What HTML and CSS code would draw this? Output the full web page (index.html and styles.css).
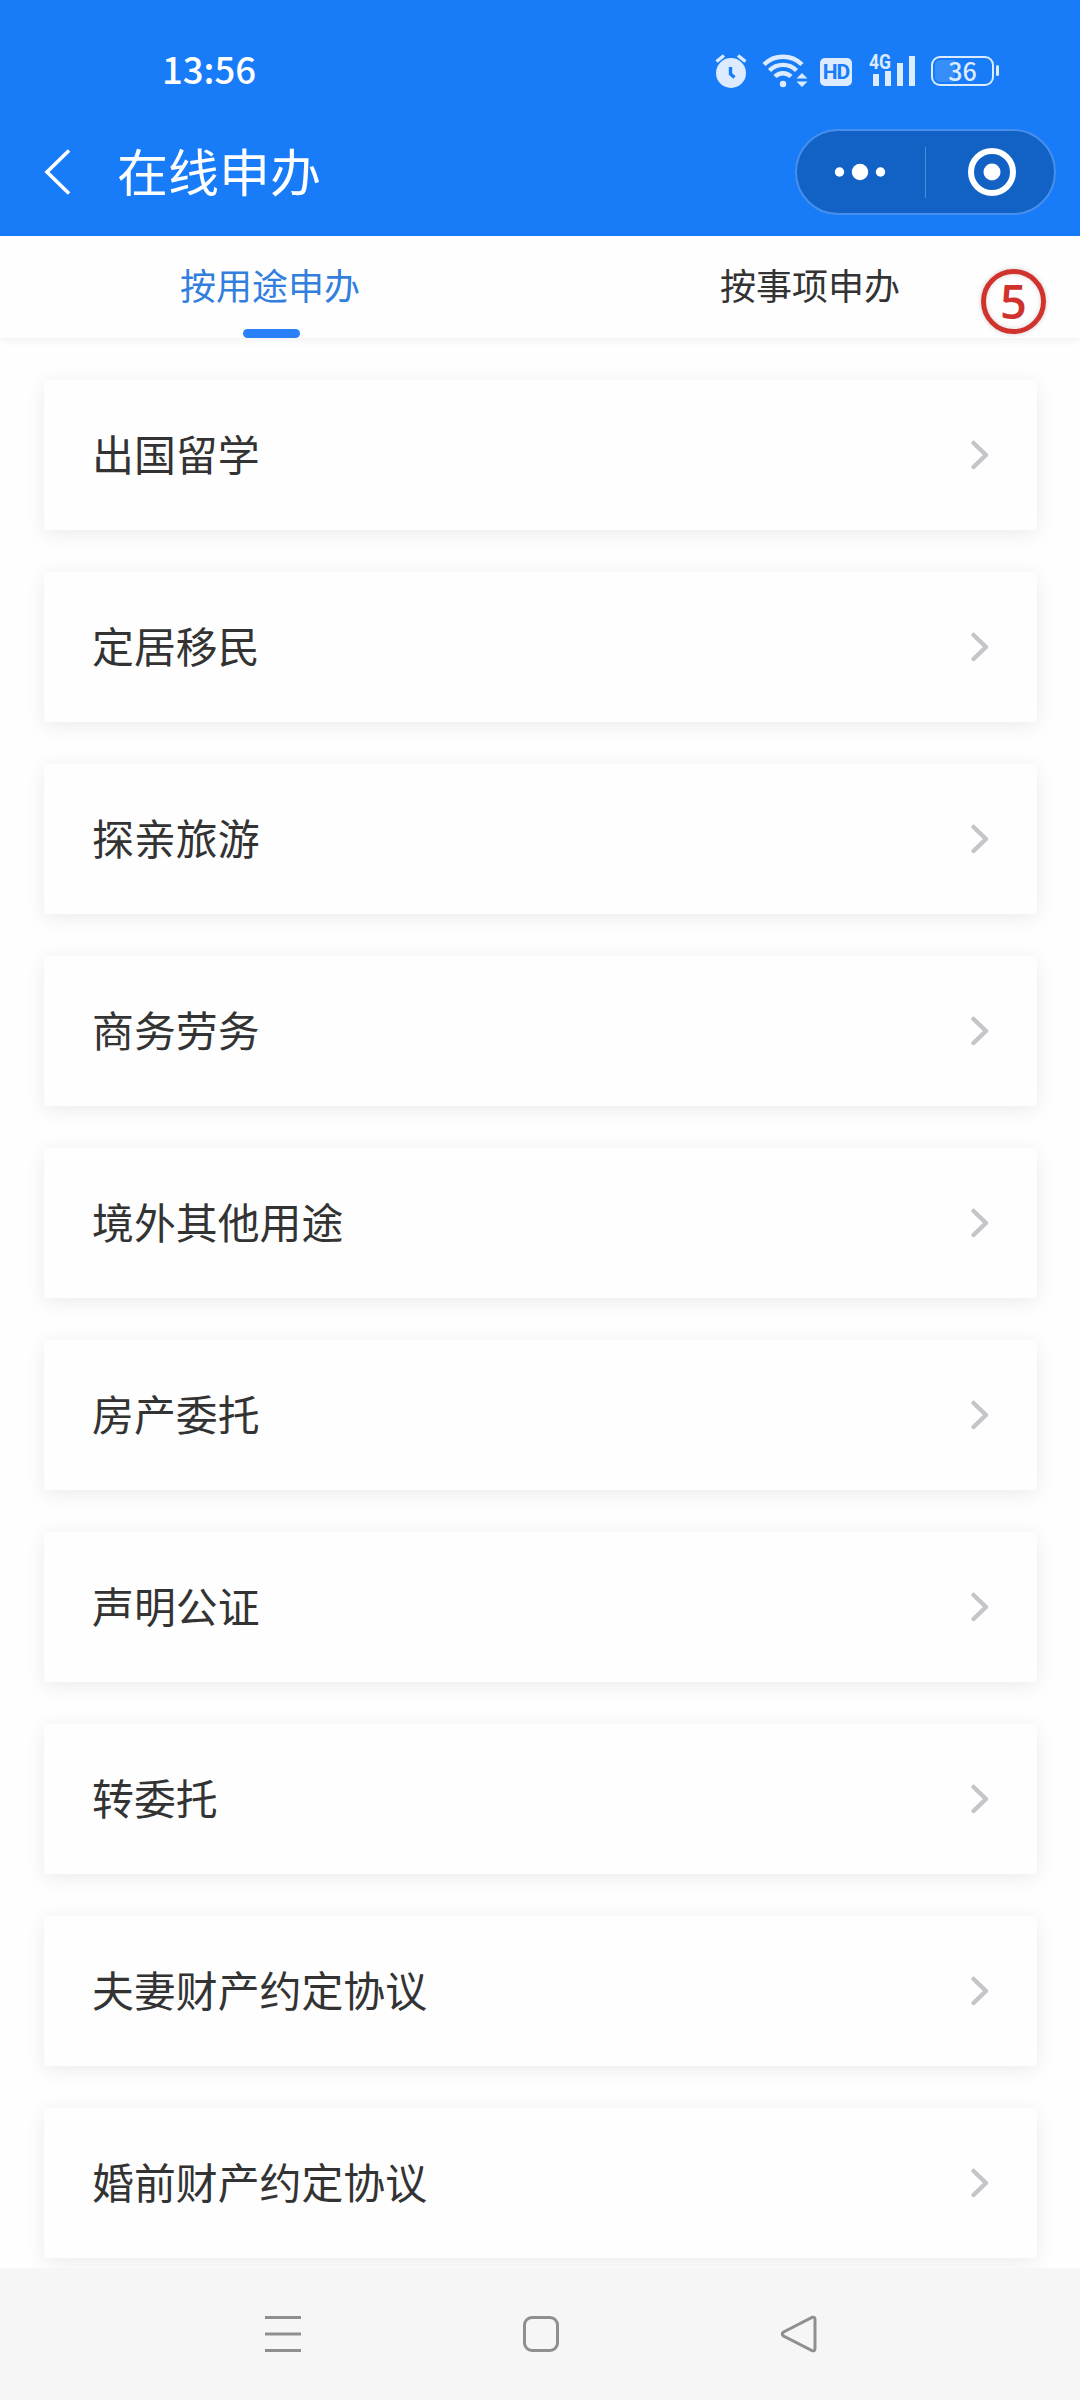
FILE: index.html
```
<!DOCTYPE html>
<html lang="zh-CN">
  <head>
    <meta charset="UTF-8" />
    <meta name="viewport" content="width=device-width, initial-scale=1.0" />
    <title>在线申办</title>
    <link rel="stylesheet" href="styles.css">
  </head>

  <body>
    <header class="header">
      <div class="status-bar">
        <span class="time">13:56</span>
        <div class="status-icons">
          <!-- alarm -->
          <svg width="34" height="36" viewBox="0 0 34 36">
            <circle cx="17" cy="20" r="15" fill="#dcebff" />
            <path d="M2.5 8.5L10 2.5M31.5 8.5L24 2.5" stroke="#dcebff" stroke-width="3.4" fill="none" />
            <path d="M16.5 14v7l4 3.5" stroke="#187cf9" stroke-width="3.4" fill="none" />
          </svg>
          <!-- wifi -->
          <svg class="wifi" width="46" height="36" viewBox="0 0 46 36">
            <g stroke="#dcebff" stroke-width="4.4" fill="none">
              <path d="M2 11.5A27 27 0 0 1 40 11.5" />
              <path d="M7.5 17.5A19 19 0 0 1 34.5 17.5" />
              <path d="M13 23.5A11.5 11.5 0 0 1 29 23.5" />
            </g>
            <circle cx="21" cy="31" r="3.2" fill="#dcebff" />
            <path d="M34.5 25.5h11l-5.500-5.500zM34.500 28.500h11l-5.500 5.500z" fill="#dcebff" />
          </svg>
          <span class="hd">HD</span>
          <!-- signal -->
          <svg class="signal" width="48" height="52" viewBox="0 -8 48 52">
            <text x="1" y="16" textLength="22" lengthAdjust="spacingAndGlyphs">4G</text>
            <path d="M5 21h6v12H5zM17 18h6v15h-6zM29 10h6v23h-6zM41 3h6v30h-6z" fill="#dcebff" />
          </svg>
          <div class="battery"><span>36</span></div>
        </div>
      </div>

      <div class="nav-bar">
        <svg class="back" width="28" height="50" viewBox="0 0 28 50">
          <path d="M25 3.5L3 25L25 46.5" stroke="#fff" stroke-width="3.6" fill="none" />
        </svg>
        <h1>在线申办</h1>
        <div class="capsule">
          <svg class="more" width="52" height="18" viewBox="0 0 52 18">
            <g fill="#fff">
              <circle cx="5.5" cy="9" r="4.7" />
              <circle cx="26" cy="9" r="8.2" />
              <circle cx="46.5" cy="9" r="4.7" />
            </g>
          </svg>
          <div class="divider"></div>
          <svg class="close" width="50" height="50" viewBox="0 0 50 50">
            <circle cx="25" cy="25" r="21" stroke="#fff" stroke-width="6" fill="none" />
            <circle cx="25" cy="25" r="8.5" fill="#fff" />
          </svg>
        </div>
      </div>
    </header>

    <nav class="tabs">
      <div class="tab active">按用途申办</div>
      <div class="tab">按事项申办</div>
      <div class="step">5</div>
    </nav>

    <main class="list" id="list"></main>

    <footer class="system-nav">
      <svg width="40" height="40" viewBox="0 0 40 40">
        <path d="M2 3.5h36M2 20h36M2 36.5h36" />
      </svg>
      <svg width="40" height="40" viewBox="0 0 40 40">
        <rect x="3.5" y="3.5" width="33" height="33" rx="7.5" />
      </svg>
      <svg width="40" height="40" viewBox="0 0 40 40">
        <path d="M4.5 18L33 3.3Q36 2.5 36 5.5V34.5Q36 37.5 33 36.7L4.5 22Q2 20 4.5 18z" />
      </svg>
    </footer>

    <script>
      const list = document.getElementById("list");
      const items = [
        "出国留学",
        "定居移民",
        "探亲旅游",
        "商务劳务",
        "境外其他用途",
        "房产委托",
        "声明公证",
        "转委托",
        "夫妻财产约定协议",
        "婚前财产约定协议",
      ];

      items.forEach((item) => {
        const card = document.createElement("div");
        card.classList.add("card");
        card.innerHTML = `
          <span>${item}</span>
          <svg width="20" height="32" viewBox="0 0 20 32">
            <path d="M3.5 4L16 16L3.5 28" />
          </svg>`;
        list.appendChild(card);
      });
    </script>
  </body>
</html>
```

FILE: styles.css
```
* {
  box-sizing: border-box;
}
body {
  margin: 0;
  height: 2400px;
  display: flex;
  flex-direction: column;
  overflow: hidden;
  background-color: #fefefe;
  color: #333;
  font-family: "Noto Sans CJK SC", sans-serif;
}
svg {
  display: block;
  flex-shrink: 0;
}

.header {
  height: 236px;
  flex-shrink: 0;
  background-color: #187cf9;
  color: #fff;
}
.status-bar {
  display: flex;
  justify-content: space-between;
  align-items: center;
  height: 129px;
  padding: 13px 81px 0 162px;
}
.time {
  padding-bottom: 4px;
  font-size: 36.5px;
  font-weight: 500;
  line-height: 40px;
}
.status-icons {
  display: flex;
  align-items: center;
}
.wifi {
  margin-left: 14px;
}
.hd {
  width: 32px;
  height: 28px;
  margin-top: 2px;
  margin-left: 12px;
  border-radius: 5px;
  background-color: #dcebff;
  color: #187cf9;
  font-family: Roboto, sans-serif;
  font-size: 21px;
  font-weight: 700;
  line-height: 28px;
  text-align: center;
  letter-spacing: -1px;
}
.signal {
  margin-left: 16px;
}
.signal text {
  fill: #dcebff;
  font-family: Roboto, sans-serif;
  font-size: 20px;
  font-weight: 700;
}
.battery {
  position: relative;
  width: 63px;
  height: 30px;
  margin-left: 15px;
  margin-right: 5px;
  border: 2.5px solid #dcebff;
  border-radius: 9px;
  background: linear-gradient(to right, #378efa 36%, transparent 36%) content-box;
  padding: 2px;
  color: #dcebff;
  font-size: 25px;
  font-weight: 500;
  line-height: 20px;
  text-align: center;
}
.battery::after {
  content: "";
  position: absolute;
  right: -7px;
  top: 7px;
  width: 3px;
  height: 11px;
  border-radius: 2px;
  background-color: #dcebff;
}

.nav-bar {
  display: flex;
  align-items: center;
  height: 86px;
  padding: 0 24px 0 44px;
}
h1 {
  flex: 1;
  margin: 0 0 0 45px;
  padding-bottom: 4px;
  font-size: 51px;
  font-weight: 400;
  line-height: 60px;
}
.capsule {
  display: flex;
  align-items: center;
  width: 261px;
  height: 86px;
  border: 2px solid #468fec;
  border-radius: 43px;
  background-color: #1262c6;
}
.more {
  margin-left: 37px;
}
.divider {
  width: 1px;
  height: 51px;
  margin-left: 39px;
  background-color: #4b8ee0;
}
.close {
  margin-left: 41px;
}

.tabs {
  position: relative;
  display: flex;
  height: 102px;
  flex-shrink: 0;
  box-shadow: 0 2px 8px rgba(0, 0, 0, 0.06);
}
.tab {
  position: relative;
  flex: 1;
  font-size: 36px;
  line-height: 96px;
  text-align: center;
}
.tab.active {
  color: #327fdd;
}
.tab.active::after {
  content: "";
  position: absolute;
  left: 243px;
  bottom: 0;
  width: 57px;
  height: 9px;
  border-radius: 4.5px;
  background-color: #2a80f8;
}
.step {
  position: absolute;
  left: 981px;
  top: 33px;
  width: 65px;
  height: 65px;
  border: 5px solid #d0322d;
  border-radius: 50%;
  box-shadow: 0 0 5px rgba(0, 0, 0, 0.2), inset 0 0 5px rgba(0, 0, 0, 0.15);
  color: #d0322d;
  font-family: "Open Sans", sans-serif;
  font-size: 47px;
  font-weight: 600;
  line-height: 54px;
  text-align: center;
}

.list {
  display: flex;
  flex: 1;
  flex-direction: column;
  gap: 42px;
  padding: 42px 43px 0 44px;
}
.card {
  display: flex;
  justify-content: space-between;
  align-items: center;
  height: 150px;
  flex-shrink: 0;
  padding: 0 47px 0 48px;
  border-radius: 4px;
  background-color: #fefefe;
  box-shadow: 0 4px 20px rgba(0, 0, 0, 0.08);
  font-size: 41.9px;
  line-height: 60px;
}
.card span {
  padding-bottom: 4px;
}
.card path {
  fill: none;
  stroke: #c5c4ca;
  stroke-width: 4.5;
  stroke-linecap: round;
  stroke-linejoin: round;
}

.system-nav {
  position: relative;
  display: flex;
  justify-content: center;
  gap: 218px;
  height: 132px;
  flex-shrink: 0;
  padding: 46px 0 0 2px;
  background-color: #f6f6f6;
}
.system-nav path,
.system-nav rect {
  fill: none;
  stroke: #8f8f8f;
  stroke-width: 3;
}
```
